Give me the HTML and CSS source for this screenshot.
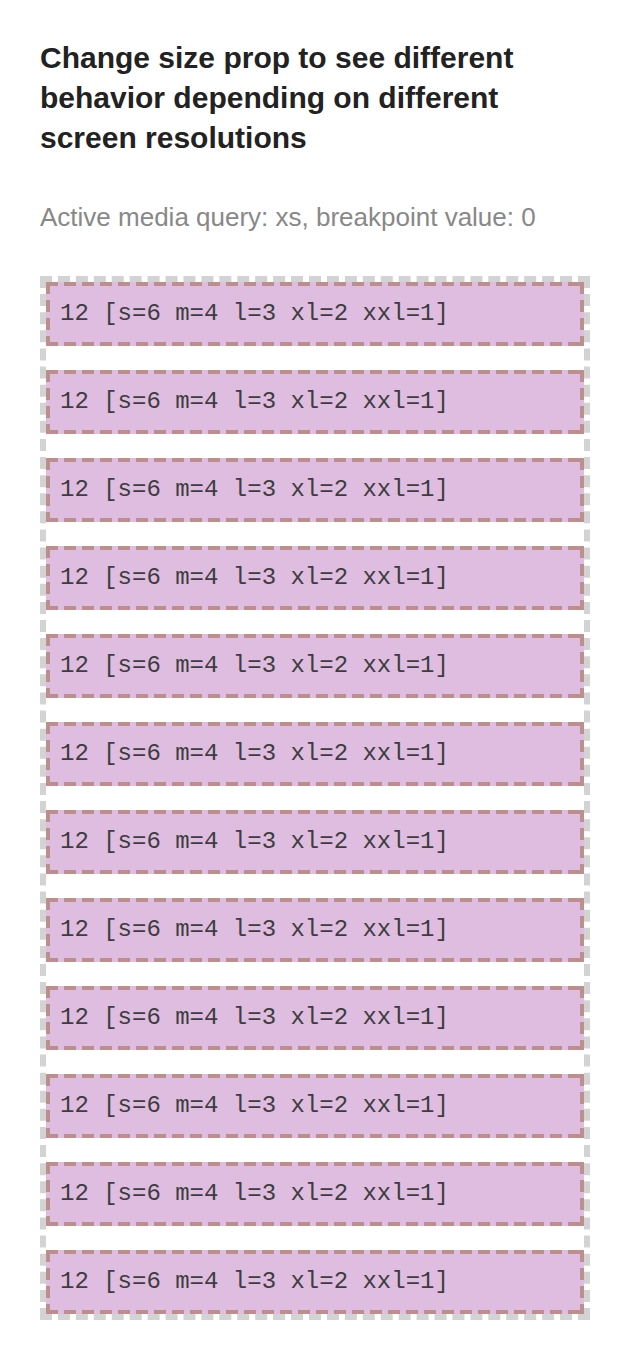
FILE: index.html
```html
<!DOCTYPE html>
<html>
<head>
<meta charset="utf-8">
<link rel="stylesheet" href="styles.css">
</head>
<body>
<div class="page">
  <h1 class="title">Change size prop to see different behavior depending on different screen resolutions</h1>
  <p class="subtitle">Active media query: xs, breakpoint value: 0</p>
  <div class="grid">
    <div class="cell">12 [s=6 m=4 l=3 xl=2 xxl=1]</div>
    <div class="cell">12 [s=6 m=4 l=3 xl=2 xxl=1]</div>
    <div class="cell">12 [s=6 m=4 l=3 xl=2 xxl=1]</div>
    <div class="cell">12 [s=6 m=4 l=3 xl=2 xxl=1]</div>
    <div class="cell">12 [s=6 m=4 l=3 xl=2 xxl=1]</div>
    <div class="cell">12 [s=6 m=4 l=3 xl=2 xxl=1]</div>
    <div class="cell">12 [s=6 m=4 l=3 xl=2 xxl=1]</div>
    <div class="cell">12 [s=6 m=4 l=3 xl=2 xxl=1]</div>
    <div class="cell">12 [s=6 m=4 l=3 xl=2 xxl=1]</div>
    <div class="cell">12 [s=6 m=4 l=3 xl=2 xxl=1]</div>
    <div class="cell">12 [s=6 m=4 l=3 xl=2 xxl=1]</div>
    <div class="cell">12 [s=6 m=4 l=3 xl=2 xxl=1]</div>
  </div>
</div>
</body>
</html>
```
FILE: styles.css
```css
html, body {
  margin: 0;
  padding: 0;
  background: #ffffff;
}
.page {
  padding: 38px 28px 40px 40px;
  font-family: "Liberation Sans", Arial, sans-serif;
}
.title {
  margin: 0;
  font-size: 30px;
  line-height: 40px;
  font-weight: bold;
  color: #222222;
}
.subtitle {
  margin: 43px 0 43px 0;
  font-size: 26px;
  line-height: 32px;
  color: #888888;
}
.grid {
  display: flex;
  flex-direction: column;
  gap: 24px;
  border: 6px dashed #d3d3d3;
  width: 538px;
  padding: 0;
}
.cell {
  padding: 18px 14px;
  background:
    repeating-linear-gradient(90deg, #bc8f8f 0 12px, transparent 12px 18px) left top / 100% 4px no-repeat,
    repeating-linear-gradient(90deg, #bc8f8f 0 12px, transparent 12px 18px) left bottom / 100% 4px no-repeat,
    repeating-linear-gradient(180deg, #bc8f8f 0 12px, transparent 12px 18px) left top / 4px 100% no-repeat,
    repeating-linear-gradient(180deg, #bc8f8f 0 12px, transparent 12px 18px) right top / 4px 100% no-repeat,
    #dfbde0;
  font-family: "Liberation Mono", "Courier New", monospace;
  font-size: 24px;
  line-height: 28px;
  color: #3d3d3d;
}
```
